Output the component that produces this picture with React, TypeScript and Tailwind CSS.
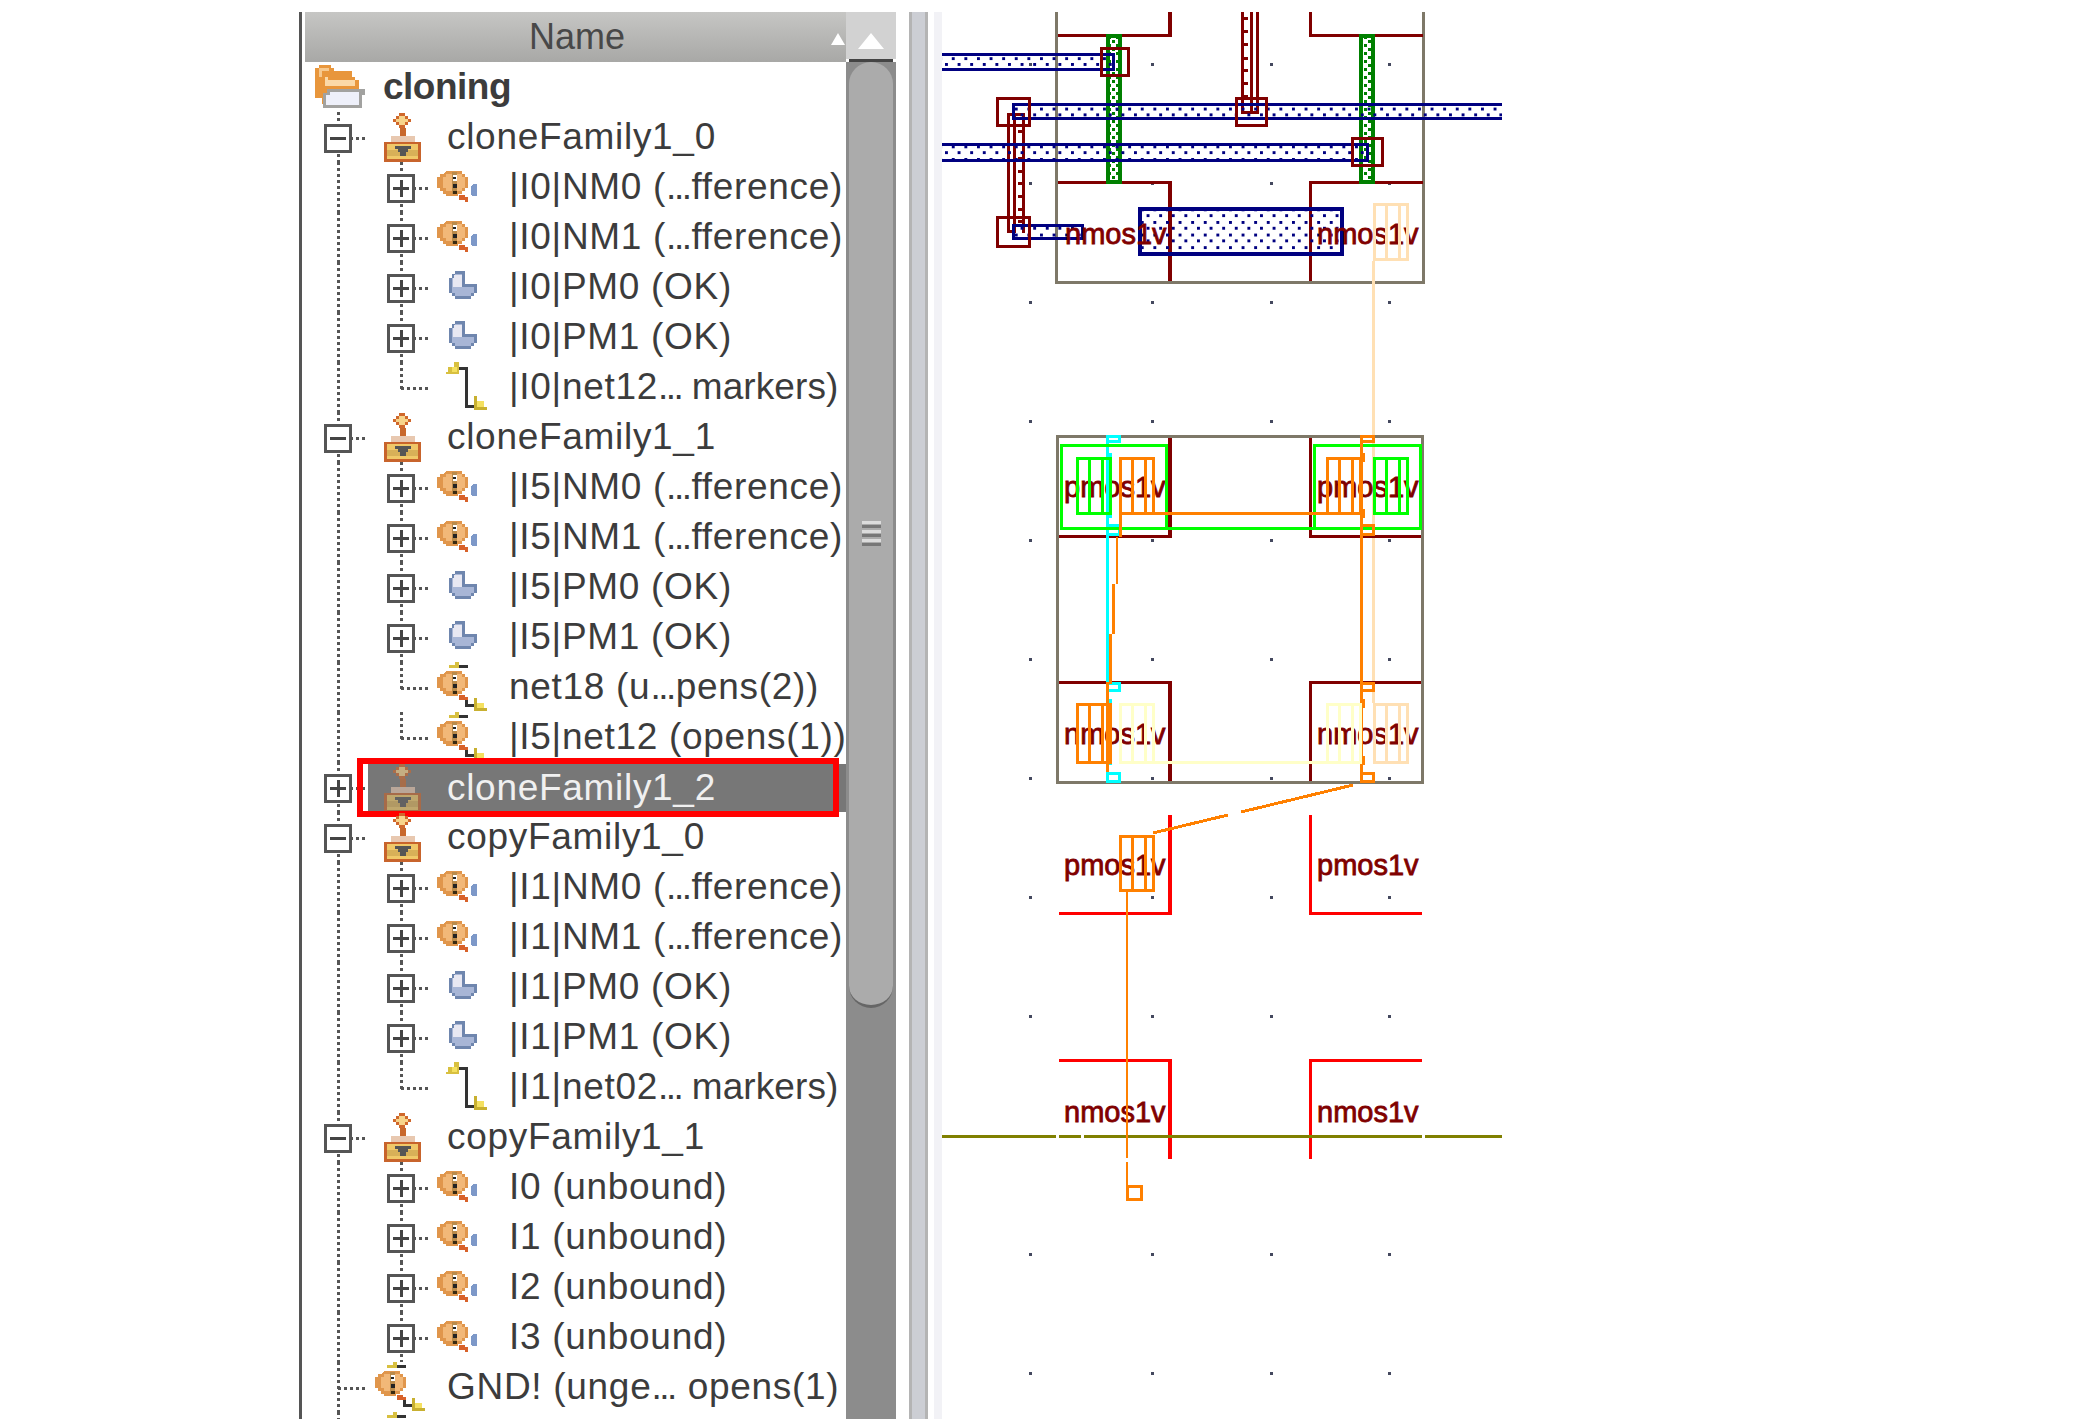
import React from 'react';

type RowKind = 'family' | 'warn' | 'ok' | 'net' | 'netWarn';

interface TreeRow {
  label: string;
  depth: 1 | 2;
  kind: RowKind;
  expander?: 'plus' | 'minus';
  last?: boolean;
  selected?: boolean;
}

const family = (label: string, expander: 'plus' | 'minus' = 'minus', selected = false): TreeRow => ({
  label,
  depth: 1,
  kind: 'family',
  expander,
  selected,
});
const child = (label: string, kind: RowKind): TreeRow => ({ label, depth: 2, kind, expander: 'plus' });
const leaf = (label: string, kind: RowKind): TreeRow => ({ label, depth: 2, kind, last: true });

const rows: TreeRow[] = [
  family('cloneFamily1_0'),
  child('|I0|NM0 (...fference)', 'warn'),
  child('|I0|NM1 (...fference)', 'warn'),
  child('|I0|PM0 (OK)', 'ok'),
  child('|I0|PM1 (OK)', 'ok'),
  leaf('|I0|net12... markers)', 'net'),
  family('cloneFamily1_1'),
  child('|I5|NM0 (...fference)', 'warn'),
  child('|I5|NM1 (...fference)', 'warn'),
  child('|I5|PM0 (OK)', 'ok'),
  child('|I5|PM1 (OK)', 'ok'),
  leaf('net18 (u...pens(2))', 'netWarn'),
  leaf('|I5|net12 (opens(1))', 'netWarn'),
  family('cloneFamily1_2', 'plus', true),
  family('copyFamily1_0'),
  child('|I1|NM0 (...fference)', 'warn'),
  child('|I1|NM1 (...fference)', 'warn'),
  child('|I1|PM0 (OK)', 'ok'),
  child('|I1|PM1 (OK)', 'ok'),
  leaf('|I1|net02... markers)', 'net'),
  family('copyFamily1_1'),
  child('I0 (unbound)', 'warn'),
  child('I1 (unbound)', 'warn'),
  child('I2 (unbound)', 'warn'),
  child('I3 (unbound)', 'warn'),
  { label: 'GND! (unge... opens(1)', depth: 1, kind: 'netWarn' },
  // only the top of this icon is on screen, its text is below the fold
  { label: '', depth: 1, kind: 'netWarn' },
];

const FolderIcon = () => (
  <svg width={78} height={50} viewBox="0 0 78 50" shapeRendering="crispEdges" className="shrink-0">
    <path d="M10 6h4V3h12v3h3v3h18v6h-30v21h-7z" fill="#e8963c" />
    <path d="M14 6h10v3h-7v6h-3z" fill="#f6c88e" />
    <path d="M17 12h6v3h27v3h4v10h-30v14h-7z" fill="#e8963c" />
    <path d="M20 15h3v3h27v6h-30z" fill="#fbd9a8" />
    <path d="M22 27h38v6h-3v13h-39v-15h4z" fill="#a2a2a0" />
    <path d="M25 30h29v13h-33v-10h4z" fill="#eef0fa" />
  </svg>
);

const WarnBubble = ({ x }: { x: number }) => (
  <g>
    <path d={`M${x + 6} 9h16v3h3v3h3v11h-3v3h-3v3h-4v2h-12v-2h-3v-3h-3v-3h-3v-11h3v-3h3z`} fill="#e0964c" />
    <path d={`M${x + 6} 12h16v3h3v11h-3v3h-16v-3h-3v-11h3z`} fill="#f2b878" />
    <rect x={x + 12} y={10} width={5} height={22} fill="#b98a4a" />
    <rect x={x + 13} y={13} width={4} height={6} fill="#fff" />
    <rect x={x + 13} y={15} width={3} height={2} fill="#222" />
    <rect x={x + 13} y={22} width={4} height={4} fill="#222" />
    <rect x={x + 13} y={29} width={4} height={3} fill="#3a2a10" />
    <path d={`M${x + 19} 33h6v2h3v5h-3v-2h-6z`} fill="#d8622a" />
  </g>
);

const RowIcon = ({ kind }: { kind: RowKind }) => (
  <svg width={79} height={50} viewBox="0 0 79 50" shapeRendering="crispEdges" className="shrink-0">
    {kind === 'family' && (
      <g>
        <path d="M31 1h6v3h3v3h3v3h-3v3h-3v3h-6v-3h-3v-3h-3v-3h3v-3h3z" fill="#d0682c" />
        <path d="M31 4h6v3h3v3h-3v3h-6v-3h-3v-3h3z" fill="#f7d48a" />
        <rect x={32} y={16} width={6} height={10} fill="#c8682c" />
        <rect x={23} y={24} width={24} height={6} fill="#e8c8b0" />
        <rect x={16} y={30} width={37} height={20} fill="#c8642c" />
        <rect x={19} y={32} width={31} height={15} fill="#f0c868" />
        <rect x={19} y={38} width={31} height={6} fill="#d8b058" />
        <path d="M27 34h16v3h-3v3h-2v4h-6v-4h-2v-3h-3z" fill="#555" />
      </g>
    )}
    {kind === 'warn' && (
      <g>
        <WarnBubble x={10} />
        <path d="M44 22h3v12h-4l-2-1v-9z" fill="#7d98c8" />
      </g>
    )}
    {kind === 'ok' && (
      <g>
        <path d="M25 9h10v13h12v9h-3v3h-3v3h-16v-3h-3v-3h-3v-15h3v-4h3z" fill="#6f86ae" />
        <path d="M25 12h7v13h12v6h-3v3h-16v-3h-3v-3h-0v-12h3z" fill="#a8b6d6" />
        <path d="M24 13h8v12h-9v-9h1z" fill="#e8e8f2" />
      </g>
    )}
    {kind === 'net' && (
      <g>
        <path d="M24 0h5v12h-13v-2h2v-5h6z" fill="#d8c040" />
        <rect x={22} y={5} width={5} height={5} fill="#f4e060" />
        <path d="M29 5h9v38h6v3h-9v-38h-6z" fill="#333" />
        <path d="M44 34h3v5h7v6h3v3h-13z" fill="#c8b030" />
        <rect x={47} y={39} width={7} height={6} fill="#f4e060" />
      </g>
    )}
    {kind === 'netWarn' && (
      <g>
        <path d="M19 3h6v-3h4v6h-10z" fill="#d8c040" />
        <rect x={29} y={3} width={9} height={3} fill="#333" />
        <WarnBubble x={10} />
        <path d="M35 38h3v4h6v3h-9z" fill="#333" />
        <path d="M44 36h3v5h7v5h3v3h-13z" fill="#c8b030" />
        <rect x={47} y={41} width={7} height={5} fill="#f4e060" />
      </g>
    )}
  </svg>
);

const Expander = ({ cx, type }: { cx: number; type: 'plus' | 'minus' }) => (
  <g>
    <rect x={cx - 12.5} y={13.5} width={25} height={26} fill="#fff" stroke="#555" strokeWidth={3} />
    <rect x={cx - 8} y={25} width={16} height={3} fill="#444" />
    {type === 'plus' && <rect x={cx - 1.5} y={18} width={3} height={17} fill="#444" />}
  </g>
);

// the dotted guide lines and the +/- box left of the row icon
const Connector = ({ row }: { row: TreeRow }) => {
  const end = row.depth === 1 ? 368 : 430;
  const cx = row.depth === 1 ? 338 : 401;
  return (
    <svg
      width={end - 305}
      height={50}
      viewBox={`305 0 ${end - 305} 50`}
      shapeRendering="crispEdges"
      className="shrink-0"
    >
      <line x1={338} y1={0} x2={338} y2={50} stroke="#555" strokeWidth={3} strokeDasharray="3 3" />
      {row.depth === 2 && (
        <line x1={401} y1={0} x2={401} y2={row.last ? 27 : 50} stroke="#555" strokeWidth={3} strokeDasharray="3 3" />
      )}
      <line x1={cx} y1={26} x2={end} y2={26} stroke="#555" strokeWidth={3} strokeDasharray="3 3" />
      {row.expander && <Expander cx={cx} type={row.expander} />}
    </svg>
  );
};

// the bitmap font in the picture has a much tighter ellipsis than Liberation Sans
const RowLabel = ({ text }: { text: string }) => {
  const parts = text.split('...');
  const tail = parts[1] ?? '';
  return (
    <span className="whitespace-pre pb-[1px] text-[37px] leading-none tracking-[0.7px]">
      {parts[0]}
      {parts.length > 1 && <span className="tracking-[-2.5px]">...</span>}
      {parts.length > 1 &&
        (tail.includes('markers') ? (
          <span className="tracking-[0.1px]">{tail}</span>
        ) : (
          <span className="ml-[2px]">{tail}</span>
        ))}
    </span>
  );
};

const Row = ({ row }: { row: TreeRow }) => (
  <div className="relative flex h-[50px] shrink-0">
    <Connector row={row} />
    <div
      className={
        row.selected
          ? 'mt-[2px] flex h-[48px] min-w-0 flex-1 items-center bg-[#777777] text-[#f0f0f0]'
          : 'flex h-[50px] min-w-0 flex-1 items-center text-[#3c3c3c]'
      }
    >
      <div className={row.selected ? 'flex opacity-60' : 'flex'}>
        <RowIcon kind={row.kind} />
      </div>
      {row.label && <RowLabel text={row.label} />}
    </div>
    {row.selected && (
      <div className="absolute top-[-4px] left-[52px] h-[59px] w-[482px] border-[6px] border-[#ff0000]" />
    )}
  </div>
);

const Tree = () => (
  <div className="flex w-[541px] shrink-0 flex-col overflow-hidden">
    <div className="flex h-[50px] shrink-0 items-center justify-center bg-gradient-to-b from-[#c6c6c4] to-[#a8a8a6] pl-[3px]">
      <span className="relative text-[36px] leading-none text-[#484848]">Name</span>
      <div className="absolute left-[831px] top-[33px] h-0 w-0 border-x-[7px] border-b-[12px] border-x-transparent border-b-white" />
    </div>
    <div className="flex h-[50px] shrink-0 items-center text-[#3c3c3c]">
      <FolderIcon />
      <span className="pb-[1px] text-[37px] font-bold leading-none tracking-[-0.5px]">cloning</span>
    </div>
    {rows.map((row, i) => (
      <Row key={i} row={row} />
    ))}
  </div>
);

const Scrollbar = () => (
  <div className="flex w-[50px] shrink-0 flex-col">
    <div className="flex h-[47px] shrink-0 items-start justify-center bg-[#d2d2d2] pt-[21px]">
      <div className="h-0 w-0 border-x-[13px] border-b-[16px] border-x-transparent border-b-white" />
    </div>
    <div className="mx-[3px] h-[3px] shrink-0 bg-[#444444]" />
    <div className="flex flex-1 flex-col bg-[#8c8c8c]">
      <div className="mx-[3px] flex h-[946px] items-center justify-center rounded-t-[22px] rounded-b-[22px] border-b-[3px] border-[#666666] bg-[#ababab]">
        <div className="flex h-[26px] w-[19px] flex-col justify-between">
          <div className="h-[3px] bg-[#dcdcdc]" />
          <div className="h-[3px] bg-[#777777]" />
          <div className="h-[3px] bg-[#dcdcdc]" />
          <div className="h-[3px] bg-[#777777]" />
          <div className="h-[3px] bg-[#dcdcdc]" />
          <div className="h-[3px] bg-[#777777]" />
        </div>
      </div>
    </div>
  </div>
);

const Outline = ({
  x1,
  y1,
  x2,
  y2,
  color,
  sw = 3,
  fill = 'none',
}: {
  x1: number;
  y1: number;
  x2: number;
  y2: number;
  color: string;
  sw?: number;
  fill?: string;
}) => (
  <rect
    x={x1 + sw / 2}
    y={y1 + sw / 2}
    width={x2 - x1 - sw}
    height={y2 - y1 - sw}
    fill={fill}
    stroke={color}
    strokeWidth={sw}
  />
);

const Finger = ({ x, y1, y2, color, sw = 3 }: { x: number; y1: number; y2: number; color: string; sw?: number }) => (
  <g>
    <Outline x1={x} y1={y1} x2={x + 36} y2={y2} color={color} sw={sw} />
    <rect x={x + 12} y={y1} width={sw} height={y2 - y1} fill={color} />
    <rect x={x + 25} y={y1} width={sw} height={y2 - y1} fill={color} />
  </g>
);

const Strip = ({ x1, y1, x2, y2, color }: { x1: number; y1: number; x2: number; y2: number; color: string }) => (
  <rect x={x1} y={y1} width={x2 - x1} height={y2 - y1} fill={color} />
);

const Label = ({ x, y, text, fill = '#800000' }: { x: number; y: number; text: string; fill?: string }) => (
  <text
    x={x}
    y={y}
    fill={fill}
    fontFamily="'Liberation Sans', sans-serif"
    fontSize={29}
    stroke={fill}
    strokeWidth={0.8}
    shapeRendering="auto"
  >
    {text}
  </text>
);

const gridX = [1029, 1151, 1270, 1388];
const gridY = [63, 182, 301, 420, 539, 658, 777, 896, 1015, 1253, 1372];
const teethTop = [17, 30, 43, 57, 69, 82, 95];
const teethSide = [130, 143, 157, 170, 182, 195, 208, 220];

const Layout = () => (
  <svg
    width={560}
    height={1407}
    viewBox="942 12 560 1407"
    shapeRendering="crispEdges"
    className="shrink-0"
  >
    <defs>
      <pattern id="navyDots" width={12.6} height={12.6} patternUnits="userSpaceOnUse">
        <rect x={0} y={0} width={3} height={3} fill="#000080" />
        <rect x={6.3} y={6.3} width={3} height={3} fill="#000080" />
      </pattern>
      <pattern id="greenCheck" width={8} height={8} patternUnits="userSpaceOnUse">
        <rect x={0} y={0} width={8} height={8} fill="#fff" />
        <rect x={0} y={0} width={3} height={3} fill="#008000" />
        <rect x={4} y={4} width={3} height={3} fill="#008000" />
      </pattern>
    </defs>

    {gridX.map(x => gridY.map(y => <rect key={`${x}-${y}`} x={x} y={y} width={3} height={3} fill="#44485e" />))}

    {/* top cell */}
    <g>
      <path d="M1056.5 12v270h367v-270" fill="none" stroke="#7e7868" strokeWidth={3} />
      <Strip x1={1058} y1={34} x2={1172} y2={37} color="#800000" />
      <Strip x1={1168} y1={12} x2={1172} y2={37} color="#800000" />
      <Strip x1={1309} y1={12} x2={1312} y2={37} color="#800000" />
      <Strip x1={1309} y1={34} x2={1423} y2={37} color="#800000" />
      <Strip x1={1058} y1={181} x2={1172} y2={184} color="#800000" />
      <Strip x1={1168} y1={181} x2={1172} y2={281} color="#800000" />
      <Strip x1={1309} y1={181} x2={1312} y2={281} color="#800000" />
      <Strip x1={1309} y1={181} x2={1423} y2={184} color="#800000" />

      <Outline x1={1106} y1={34} x2={1122} y2={184} color="#008000" sw={4} fill="url(#greenCheck)" />
      <Outline x1={1359} y1={34} x2={1375} y2={184} color="#008000" sw={4} fill="url(#greenCheck)" />

      {/* gate stubs: solid on one side, toothed on the other */}
      <Strip x1={1250} y1={12} x2={1253} y2={114} color="#800000" />
      <Strip x1={1256} y1={12} x2={1259} y2={114} color="#800000" />
      <Strip x1={1241} y1={12} x2={1244} y2={114} color="#800000" />
      <Strip x1={1241} y1={111} x2={1259} y2={114} color="#800000" />
      {teethTop.map(y => (
        <Strip key={y} x1={1244} y1={y} x2={1248} y2={y + 3} color="#800000" />
      ))}
      <Strip x1={1007} y1={113} x2={1010} y2={233} color="#800000" />
      <Strip x1={1013} y1={113} x2={1016} y2={233} color="#800000" />
      <Strip x1={1022} y1={113} x2={1025} y2={233} color="#800000" />
      <Strip x1={1007} y1={113} x2={1025} y2={116} color="#800000" />
      <Strip x1={1007} y1={230} x2={1016} y2={233} color="#800000" />
      {teethSide.map(y => (
        <Strip key={y} x1={1018} y1={y} x2={1022} y2={y + 3} color="#800000" />
      ))}

      <Outline x1={930} y1={53} x2={1115} y2={71} color="#000080" fill="url(#navyDots)" />
      <Outline x1={1012} y1={103} x2={1520} y2={120} color="#000080" fill="url(#navyDots)" />
      <Outline x1={930} y1={143} x2={1369} y2={162} color="#000080" fill="url(#navyDots)" />
      <Outline x1={1012} y1={224} x2={1084} y2={240} color="#000080" fill="url(#navyDots)" />
      <Outline x1={1138} y1={207} x2={1344} y2={256} color="#000080" sw={4} fill="url(#navyDots)" />

      <Outline x1={1100} y1={47} x2={1130} y2={77} color="#800000" />
      <Outline x1={996} y1={97} x2={1031} y2={127} color="#800000" />
      <Outline x1={1235} y1={97} x2={1268} y2={127} color="#800000" />
      <Outline x1={1351} y1={137} x2={1384} y2={167} color="#800000" />
      <Outline x1={996} y1={216} x2={1031} y2={248} color="#800000" />

      <Label x={1065} y={244} text="nmos1v" />
      <Label x={1317} y={244} text="nmos1v" />

      <Finger x={1373} y1={203} y2={261} color="#ffe0b4" />
    </g>

    <Strip x1={1372} y1={261} x2={1375} y2={703} color="#ffe0b4" />

    {/* middle cell */}
    <g>
      <Label x={1064} y={497} text="pmos1v" />
      <Label x={1317} y={497} text="pmos1v" />
      <Label x={1064} y={744} text="nmos1v" />
      <Label x={1317} y={744} text="nmos1v" />

      <Strip x1={1059} y1={535} x2={1172} y2={538} color="#800000" />
      <Strip x1={1168} y1={436} x2={1172} y2={538} color="#800000" />
      <Strip x1={1309} y1={436} x2={1312} y2={538} color="#800000" />
      <Strip x1={1309} y1={535} x2={1423} y2={538} color="#800000" />
      <Strip x1={1059} y1={681} x2={1172} y2={684} color="#800000" />
      <Strip x1={1168} y1={681} x2={1172} y2={782} color="#800000" />
      <Strip x1={1309} y1={681} x2={1312} y2={782} color="#800000" />
      <Strip x1={1309} y1={681} x2={1423} y2={684} color="#800000" />

      <Outline x1={1056} y1={435} x2={1424} y2={784} color="#7e7868" />

      <Strip x1={1106} y1={435} x2={1109} y2={783} color="#00ffff" />
      <Outline x1={1106} y1={435} x2={1121} y2={443} color="#00ffff" />
      <Outline x1={1106} y1={524} x2={1121} y2={536} color="#00ffff" />
      <Outline x1={1106} y1={682} x2={1121} y2={692} color="#00ffff" />
      <Outline x1={1106} y1={772} x2={1121} y2={783} color="#00ffff" />
      <Strip x1={1109} y1={453} x2={1112} y2={462} color="#00ffff" />
      <Strip x1={1109} y1={509} x2={1112} y2={518} color="#00ffff" />
      <Strip x1={1109} y1={699} x2={1112} y2={708} color="#00ffff" />
      <Strip x1={1109} y1={756} x2={1112} y2={765} color="#00ffff" />

      <Strip x1={1116} y1={537} x2={1118} y2={584} color="#ff8000" />
      <Strip x1={1112} y1={584} x2={1115} y2={634} color="#ff8000" />
      <Strip x1={1109} y1={634} x2={1112} y2={684} color="#ff8000" />
      <Strip x1={1106} y1={682} x2={1109} y2={772} color="#ff8000" />

      <Outline x1={1060} y1={444} x2={1168} y2={530} color="#00ff00" />
      <Outline x1={1313} y1={444} x2={1422} y2={530} color="#00ff00" />
      <Strip x1={1060} y1={527} x2={1422} y2={530} color="#00ff00" />
      <Finger x={1076} y1={457} y2={515} color="#00ff00" />
      <Finger x={1373} y1={457} y2={515} color="#00ff00" />

      <Strip x1={1119} y1={512} x2={1363} y2={515} color="#ff8000" />
      <Strip x1={1119} y1={512} x2={1122} y2={537} color="#ff8000" />
      <Finger x={1119} y1={457} y2={515} color="#ff8000" />
      <Finger x={1326} y1={457} y2={515} color="#ff8000" />

      <Strip x1={1360} y1={435} x2={1363} y2={783} color="#ff8000" />
      <Outline x1={1360} y1={435} x2={1375} y2={443} color="#ff8000" />
      <Outline x1={1360} y1={524} x2={1375} y2={536} color="#ff8000" />
      <Outline x1={1360} y1={682} x2={1375} y2={692} color="#ff8000" />
      <Outline x1={1360} y1={772} x2={1375} y2={783} color="#ff8000" />
      <Strip x1={1363} y1={453} x2={1365} y2={462} color="#ff8000" />
      <Strip x1={1363} y1={509} x2={1365} y2={518} color="#ff8000" />
      <Strip x1={1363} y1={699} x2={1365} y2={708} color="#ff8000" />
      <Strip x1={1363} y1={756} x2={1365} y2={765} color="#ff8000" />

      <Finger x={1076} y1={703} y2={764} color="#ff8000" />
      <Finger x={1373} y1={703} y2={764} color="#ffe0b4" />
      <Strip x1={1119} y1={761} x2={1362} y2={764} color="#ffffc8" />
      <Finger x={1119} y1={703} y2={764} color="#ffffc8" />
      <Finger x={1326} y1={703} y2={764} color="#ffffc8" />
    </g>

    {/* bottom cells */}
    <g>
      <Label x={1064} y={875} text="pmos1v" />
      <Label x={1317} y={875} text="pmos1v" />
      <Label x={1064} y={1122} text="nmos1v" />
      <Label x={1317} y={1122} text="nmos1v" />

      <Strip x1={1168} y1={815} x2={1172} y2={915} color="#ff0000" />
      <Strip x1={1059} y1={912} x2={1172} y2={915} color="#ff0000" />
      <Strip x1={1309} y1={815} x2={1312} y2={915} color="#ff0000" />
      <Strip x1={1309} y1={912} x2={1422} y2={915} color="#ff0000" />
      <Strip x1={1059} y1={1059} x2={1172} y2={1062} color="#ff0000" />
      <Strip x1={1168} y1={1059} x2={1172} y2={1159} color="#ff0000" />
      <Strip x1={1309} y1={1059} x2={1312} y2={1159} color="#ff0000" />
      <Strip x1={1309} y1={1059} x2={1422} y2={1062} color="#ff0000" />

      <Strip x1={942} y1={1135} x2={1056} y2={1138} color="#808000" />
      <Strip x1={1059} y1={1135} x2={1081} y2={1138} color="#808000" />
      <Strip x1={1084} y1={1135} x2={1422} y2={1138} color="#808000" />
      <Strip x1={1425} y1={1135} x2={1502} y2={1138} color="#808000" />

      <Strip x1={1126} y1={892} x2={1128} y2={1158} color="#ff8000" />
      <Strip x1={1126} y1={1162} x2={1128} y2={1188} color="#ff8000" />
      <Outline x1={1126} y1={1185} x2={1143} y2={1201} color="#ff8000" />
      <Finger x={1119} y1={835} y2={892} color="#ff8000" />

      <line x1={1353} y1={785} x2={1241} y2={812} stroke="#ff8000" strokeWidth={3} />
      <line x1={1228} y1={815} x2={1153} y2={833} stroke="#ff8000" strokeWidth={3} />
    </g>
  </svg>
);

const App: React.FC = () => {
  return (
    <div className="flex h-[1419px] w-[2094px] overflow-hidden bg-white pt-[12px] pl-[299px] font-['Liberation_Sans',sans-serif]">
      <div className="flex shrink-0 border-l-[3px] border-[#555555] pl-[3px]">
        <Tree />
        <Scrollbar />
      </div>
      <div className="ml-[13px] w-[19px] shrink-0 border-x-[3px] border-[#b4b4b4] bg-[#ccced4]" />
      <div className="ml-[6px] w-[8px] shrink-0 bg-[#f2f2f6]" />
      <Layout />
    </div>
  );
};

export default App;
